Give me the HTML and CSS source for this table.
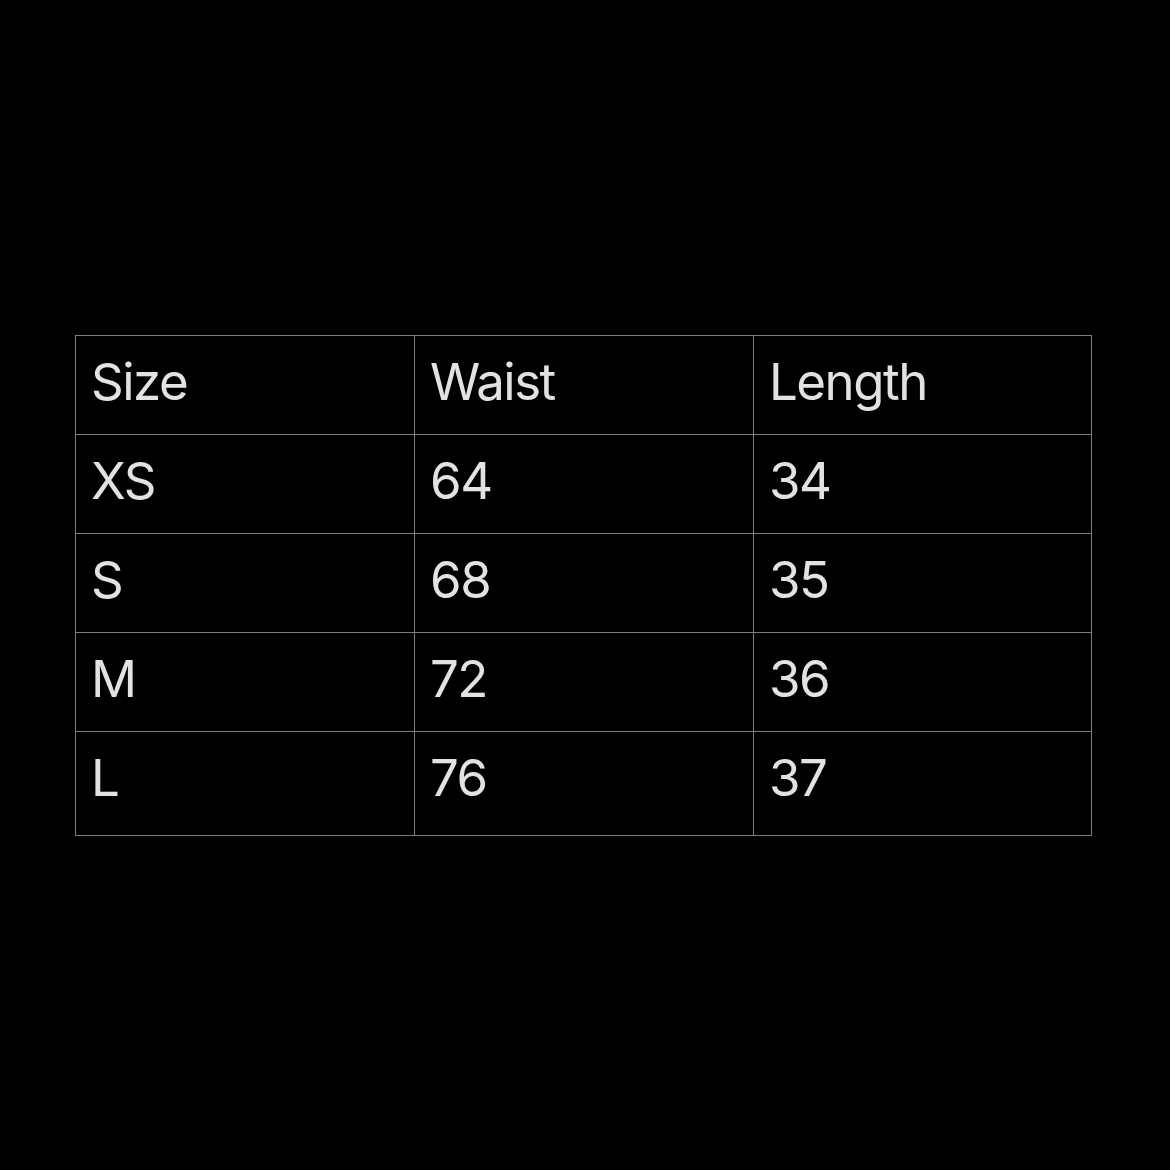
FILE: index.html
```html
<!DOCTYPE html>
<html>
<head>
<meta charset="utf-8">
<link rel="stylesheet" href="styles.css">
</head>
<body>
<div class="page">
  <table class="sizes">
    <colgroup><col class="c1"><col class="c2"><col class="c3"></colgroup>
    <tr><td>Size</td><td>Waist</td><td>Length</td></tr>
    <tr><td>XS</td><td>64</td><td>34</td></tr>
    <tr><td>S</td><td>68</td><td>35</td></tr>
    <tr><td>M</td><td>72</td><td>36</td></tr>
    <tr class="last"><td>L</td><td>76</td><td>37</td></tr>
  </table>
</div>
</body>
</html>
```
FILE: styles.css
```css
html, body {
  margin: 0;
  background: #000;
}
.page {
  padding: 335px 0 0 75px;
}
.sizes {
  border-collapse: collapse;
  width: 1016px;
  table-layout: fixed;
  font-family: Inter, "Noto Sans", sans-serif;
  font-size: 51px;
  line-height: 51px;
  letter-spacing: -1.5px;
  color: #e2e2e2;
}
.sizes .c1 { width: 339px; }
.sizes .c2 { width: 339px; }
.sizes .c3 { width: 338px; }
.sizes td {
  border: 1px solid #7d7d7d;
  height: 99px;
  box-sizing: border-box;
  padding: 20px 0 0 15px;
  vertical-align: top;
}
.sizes .last td {
  height: 104px;
}
```
